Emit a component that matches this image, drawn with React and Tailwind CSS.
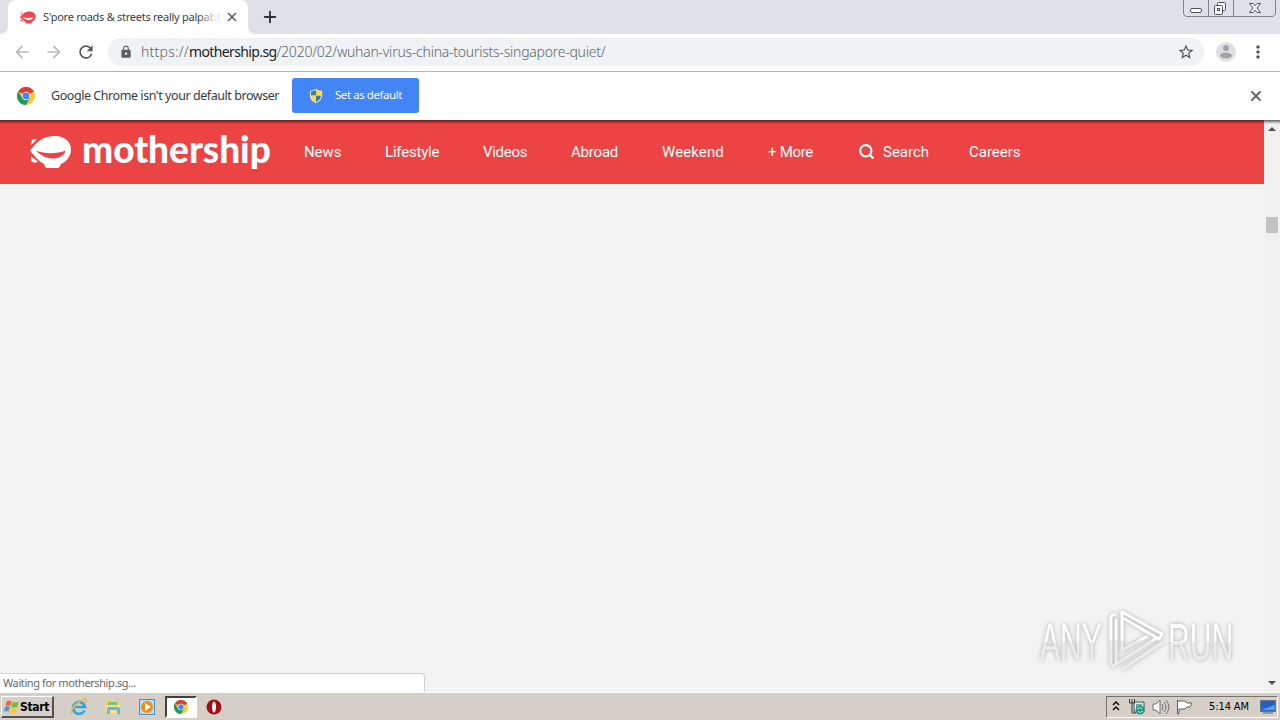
import { Plus, Search, X } from 'lucide-react';
import { MdArrowBack, MdArrowForward, MdLock, MdRefresh, MdStarBorder, MdMoreVert } from 'react-icons/md';

const navLinks = [
  { label: 'News', width: 'w-[81px]', tracking: 'tracking-[-0.1px]' },
  { label: 'Lifestyle', width: 'w-[98px]', tracking: 'tracking-[-0.2px]' },
  { label: 'Videos', width: 'w-[88px]', tracking: 'tracking-[-0.3px]' },
  { label: 'Abroad', width: 'w-[91px]', tracking: 'tracking-[-0.2px]' },
  { label: 'Weekend', width: 'w-[106px]', tracking: 'tracking-[0.1px]' },
  { label: '+ More', width: 'w-[91px]', tracking: 'tracking-[-0.3px]' },
];

const ShipIcon = ({ className, fill, cut }) => (
  <svg viewBox="0 0 42 32" className={className} fill="none">
    <path d="M1.200 7Q1.200 3 5 3H7L1.200 9Z M1 20.500L8.500 25.500Q6.500 27 3.500 26.500Q1 26 1 23Z" fill={fill} />
    <path d="M0 14.500C7 5 14 0 24.500 0C35 0 41 6 41 13.500C41 20.500 36 26 31 28L29.500 31Q29 32 27.500 32H17Q15.500 32 15 30.500L14 28C9 25.500 4.500 20.500 0 14.500Z" fill={fill} stroke={cut} strokeWidth="3" className="[paint-order:stroke]" />
    <path d="M6 14.800C15 18 27 18 35.800 14.500C34 20 29 22.500 22.500 22.500C15.500 22.500 10.500 19 6 14.800Z" fill={cut} />
  </svg>
);

const ChromeIcon = ({ className }) => (
  <svg viewBox="0 0 24 24" className={className}>
    <circle cx="12" cy="12" r="12" fill="#fbc934" />
    <path d="M12 12L1.600 6A12 12 0 0 1 22.400 6Z" fill="#df3c30" />
    <path d="M12 6.500H22.700L21.500 5H9Z" fill="#df3c30" />
    <path d="M1.600 6A12 12 0 0 0 12 24L17.200 14.800L12 12L7 14.500Z" fill="#219a55" />
    <circle cx="12" cy="12" r="5.600" fill="#fff" />
    <circle cx="12" cy="12" r="4.600" fill="#4285f4" />
  </svg>
);

const ShieldIcon = () => (
  <svg viewBox="0 0 16 16" className="h-4 w-4">
    <path d="M8 0.500Q11 2.500 14.500 2.500V7C14.500 11 12 14 8 15.500C4 14 1.500 11 1.500 7V2.500Q5 2.500 8 0.500Z" fill="#dce6ea" stroke="#64798a" strokeWidth="0.7" />
    <path d="M8 2L3 3.800V7.500H8Z M8 7.500H13C13 10.500 11 12.700 8 14Z" fill="#2f79bd" />
    <path d="M8 2L13 3.800V7.500H8Z M8 7.500H3C3 10.500 5 12.700 8 14Z" fill="#ffdc2c" />
  </svg>
);

const WindowControls = () => (
  <svg viewBox="0 0 94 17" className="h-[17px] w-[94px]" fill="none" stroke="#7d8490">
    <path d="M0.500 0V13Q0.500 16.500 4 16.500H88Q92.500 16.500 92.500 13V0M25.500 0V16M50.500 0V16" />
    <rect x="7.500" y="8.500" width="11" height="4" rx="1.500" fill="#fff" stroke="#4d535d" />
    <g stroke="#4d535d" fill="#f4f6f8">
      <rect x="34.500" y="2.500" width="8" height="8" rx="1" />
      <rect x="31.500" y="5.500" width="8" height="9" rx="1" />
      <rect x="34.500" y="8.500" width="2" height="2" />
      <path d="M66.500 3.500H70L72 5.700L74 3.500H77.500L74 8L77.500 12.500H74L72 10.300L70 12.500H66.500L70 8Z" />
    </g>
  </svg>
);

const TabStrip = () => (
  <div className="flex h-[34px] items-start bg-[#dee1e8]">
    <svg viewBox="0 0 8 34" className="h-[34px] w-2"><path d="M0 34Q8 34 8 26V34Z" fill="#fff" /></svg>
    <div className="flex h-[34px] w-60 items-center rounded-t-lg bg-white pl-3 pr-[9px]">
      <ShipIcon className="h-[13px] w-4 shrink-0" fill="#ef4650" cut="#fff" />
      <div className="relative ml-[7px] w-[175px] shrink-0 whitespace-nowrap font-['Noto_Sans','Open_Sans',sans-serif] text-[11px] tracking-[-0.26px] text-[#3c4043]">
        S'pore roads &amp; streets really palpabl
        <span className="absolute inset-y-0 right-0 w-5 bg-gradient-to-r from-transparent to-white" />
      </div>
      <X className="ml-[7px] h-3.5 w-3.5 shrink-0 text-[#5f6368]" strokeWidth={2.8} />
    </div>
    <svg viewBox="0 0 8 34" className="h-[34px] w-2"><path d="M8 34Q0 34 0 26V34Z" fill="#fff" /></svg>
    <Plus className="ml-[5px] mt-2 h-[18px] w-[18px] text-[#303438]" strokeWidth={2.5} />
    <div className="ml-auto mr-[3px]"><WindowControls /></div>
  </div>
);

const Toolbar = () => (
  <div className="flex h-[38px] items-center border-b border-[#b3b5b9] bg-white pb-0.5 pl-3">
    <MdArrowBack className="h-5 w-5 text-[#b9bbbe]" />
    <MdArrowForward className="ml-3 h-5 w-5 text-[#b9bbbe]" />
    <MdRefresh className="ml-3 h-5 w-5 text-[#55595e]" />
    <div className="ml-3 flex h-7 w-[1096px] items-center rounded-full bg-[#f0f3f5] pl-[11px] pr-[9px]">
      <MdLock className="h-3.5 w-3.5 text-[#5b5f64]" />
      <div className="ml-2 flex whitespace-nowrap font-['Noto_Sans','Open_Sans',sans-serif] text-[14px] font-light text-[#5f646a]">
        <span className="tracking-[0.25px]">https://</span>
        <span className="font-normal tracking-[-0.62px] text-[#202124]">mothership.sg</span>
        <span className="tracking-[-0.24px]">/2020/02/wuhan-virus-china-tourists-singapore-quiet/</span>
      </div>
      <MdStarBorder className="ml-auto h-[18px] w-[18px] text-[#50555a]" />
    </div>
    <svg viewBox="0 0 20 20" className="ml-3 h-5 w-5">
      <circle cx="10" cy="10" r="10" fill="#dedfe0" />
      <circle cx="10" cy="6" r="3" fill="#a2a3a4" />
      <ellipse cx="10" cy="13.500" rx="6" ry="3" fill="#a2a3a4" />
    </svg>
    <MdMoreVert className="ml-3 h-5 w-5 text-[#50555a]" />
  </div>
);

const InfoBar = () => (
  <div className="flex h-12 items-center bg-white pl-[17px] pr-[17px]">
    <ChromeIcon className="h-[18px] w-[18px]" />
    <span className="ml-4 w-[241px] whitespace-nowrap font-['Noto_Sans','Open_Sans',sans-serif] text-[12.500px] tracking-[-0.44px] text-[#383b3f]">
      Google Chrome isn't your default browser
    </span>
    <button className="mb-px flex h-[35px] w-[127px] items-center rounded-[3px] bg-[#4285f4] pl-4 font-['Noto_Sans','Open_Sans',sans-serif] text-[11.500px] tracking-[-0.44px] text-white">
      <ShieldIcon />
      <span className="mb-px ml-[11px] whitespace-nowrap">Set as default</span>
    </button>
    <X className="-mr-px ml-auto h-4 w-4 text-[#65686c]" strokeWidth={2.8} />
  </div>
);

const SiteHeader = () => (
  <header className="flex h-16 items-center bg-[#ec4444] pl-[30px] font-[Roboto,sans-serif] text-[15px] text-white">
    <ShipIcon className="h-8 w-[42px]" fill="#fff" cut="#ec4444" />
    <span className="mb-[7px] ml-[10px] w-[222px] font-['Lato',sans-serif] text-[37px] font-black leading-none tracking-[-0.02px]">mothership</span>
    {navLinks.map((link) => (
      <a key={link.label} className={`whitespace-nowrap ${link.width} ${link.tracking}`}>{link.label}</a>
    ))}
    <a className="flex w-[110px] items-center">
      <Search className="-ml-px mb-0.5 h-[17px] w-[17px]" strokeWidth={3} />
      <span className="ml-2">Search</span>
    </a>
    <a>Careers</a>
  </header>
);

const Scrollbar = () => (
  <div className="flex w-4 flex-col items-center bg-[#f1f1f1]">
    <svg viewBox="0 0 16 16" className="mt-px h-4 w-4"><path d="M4 10H12L8 6Z" fill="#505050" /></svg>
    <div className="mt-20 h-4 w-3 bg-[#c1c1c1]" />
    <svg viewBox="0 0 16 16" className="mt-auto h-4 w-4"><path d="M4 5H12L8 9Z" fill="#505050" /></svg>
  </div>
);

const WatermarkWord = ({ children }) => (
  <span className="block w-max origin-left scale-x-[0.59] bg-gradient-to-b from-white from-50% to-[#ececec] to-50% bg-clip-text font-['Liberation_Sans',sans-serif] text-[51px] leading-none text-transparent">
    {children}
  </span>
);

const Watermark = () => (
  <div className="absolute bottom-[18px] right-[46px] flex h-[68px] w-[196px] items-center drop-shadow-[0_0_2px_#aaa]">
    <div className="w-[70px] pl-0.5 pt-1"><WatermarkWord>ANY</WatermarkWord></div>
    <svg viewBox="0 0 58 64" className="h-16 w-[58px] shrink-0" fill="none" strokeWidth="3" strokeLinecap="round" strokeLinejoin="round">
      <defs>
        <linearGradient id="mark" gradientUnits="userSpaceOnUse" x1="0" y1="0" x2="0" y2="64">
          <stop offset="0.5" stopColor="#fff" />
          <stop offset="0.52" stopColor="#ececec" />
        </linearGradient>
      </defs>
      <path stroke="url(#mark)" d="M3 56V10Q3 6 7 7M8 57V12M14 43V4L54 26L51 31M15 10L49 30L5 58M14 20V42L38 29M15 61L54 35" />
    </svg>
    <div className="w-16 pl-0.5 pt-1"><WatermarkWord>RUN</WatermarkWord></div>
  </div>
);

const PageView = () => (
  <main className="relative flex h-[572px] bg-[#f3f3f3]">
    <div className="flex-1"><SiteHeader /></div>
    <Scrollbar />
    <div className="absolute inset-x-0 top-0 h-1 bg-gradient-to-b from-black/60 to-transparent" />
    <Watermark />
    <div className="absolute bottom-0 left-0 flex h-[19px] w-[425px] items-center rounded-tr border-r border-t border-[#d0d0d0] bg-white pl-[3px] font-['Noto_Sans','Open_Sans',sans-serif] text-[11px] tracking-[-0.4px] text-[#65686c]">
      Waiting for mothership.sg...
    </div>
  </main>
);

const WindowsFlag = () => (
  <svg viewBox="0 0 18 16" className="h-[18px] w-[17px] shrink-0">
    <path d="M4 2Q7 0 9 2L7.500 7Q5 5.500 2.500 7Z" fill="#ed6235" />
    <path d="M10 2.500Q13 4 16.500 2.500L15 8Q11.500 9 8.500 7.500Z" fill="#79b940" />
    <path d="M2.200 8Q5 6.500 7.200 8L5.800 13Q3.500 11.500 0.800 13Z" fill="#4699d6" />
    <path d="M8.200 8.500Q11.500 10 14.700 9L13.200 14Q10 15.500 6.700 13.500Z" fill="#f7c83c" />
  </svg>
);

const Taskbar = () => (
  <div className="flex h-7 items-center border-t border-white bg-[#d6cfc7]">
    <button className="ml-px flex h-[22px] w-[53px] items-center border-b-2 border-l border-r-2 border-t border-b-[#55514d] border-l-white border-r-[#55514d] border-t-white pl-px pt-px font-['DejaVu_Sans_Condensed','DejaVu_Sans',sans-serif] text-[12px] font-bold tracking-[-0.3px] text-black">
      <WindowsFlag />Start
    </button>
    <svg viewBox="0 0 18 18" className="ml-4 h-[18px] w-[18px]" fill="none">
      <path d="M14.500 12.500A6 6 0 1 1 15 9H5" stroke="#31a5df" strokeWidth="2.600" />
      <path d="M2 15C-1 18 2 8 9 4C16 -1 18 1 15 5" stroke="#e9bd3e" strokeWidth="1.500" />
    </svg>
    <svg viewBox="0 0 18 18" className="ml-4 h-[18px] w-[18px]">
      <path d="M2 2H7L8 4H15V15H2Z" fill="#efcf67" />
      <path d="M4 4H13V7H4Z" fill="#81bf71" />
      <path d="M2 7H16V15H2Z" fill="#f7e18c" />
      <path d="M3 16V10Q3 9 5 9H14Q16 9 16 11V16H13V12H6V16Z" fill="#64b9e4" />
    </svg>
    <svg viewBox="0 0 18 18" className="ml-4 h-[18px] w-[18px]">
      <rect x="1.500" y="1.500" width="15" height="15" fill="#b9dcf5" stroke="#488fc4" />
      <circle cx="9" cy="9" r="6" fill="#f58b18" />
      <path d="M7 5V13L13 9Z" fill="#fff" />
    </svg>
    <div className="ml-[9px] grid h-[22px] w-8 place-items-center border-2 border-b-white border-l-[#45413e] border-r-white border-t-[#45413e] bg-white">
      <ChromeIcon className="h-3.5 w-3.5" />
    </div>
    <svg viewBox="0 0 18 18" className="ml-2 h-[18px] w-[18px]">
      <circle cx="9" cy="9" r="7.500" fill="#a40e17" />
      <ellipse cx="9" cy="9" rx="2" ry="5.500" fill="#f4f1ee" />
    </svg>
    <div className="ml-auto mr-0.5 flex h-[22px] w-[172px] items-center border border-b-white border-l-[#77716c] border-r-white border-t-[#77716c] pl-[5px]">
      <svg viewBox="0 0 8 10" className="mb-0.5 h-2.5 w-2" fill="none" stroke="#111" strokeWidth="1.500"><path d="M1 4L4 1L7 4M1 9L4 6L7 9" /></svg>
      <svg viewBox="0 0 18 18" className="ml-2 h-[18px] w-[18px]">
        <path d="M6 4H16V14H6Z" fill="#ddebed" stroke="#43535a" />
        <path d="M8 6H14V12H8Z" fill="#68aaa7" />
        <path d="M1.500 1V5H6.500V1M4 1V15H8" fill="none" stroke="#383b3c" />
        <circle cx="12" cy="12" r="4.500" fill="#249783" />
        <path d="M9 11Q12 8 14 11M15 13Q12 16 10 13" fill="none" stroke="#baf0df" />
      </svg>
      <svg viewBox="0 0 18 16" className="ml-1.5 h-4 w-[18px]" fill="none" stroke="#73716f">
        <path d="M1 5H4L8 1V15L4 11H1Z" fill="#f6f6f6" />
        <path d="M10 5Q12 8 10 11M12 3Q16 8 12 13M14 1Q20 8 14 15" />
      </svg>
      <svg viewBox="0 0 18 16" className="ml-1.5 h-4 w-[18px]" fill="#fff" stroke="#605e5b"><path d="M1.500 1V15H3V10H9L11 8H14L16 4H11L9 2H2Z" /></svg>
      <span className="ml-[15px] w-[51px] whitespace-nowrap pt-0.5 font-['DejaVu_Sans_Condensed','DejaVu_Sans',sans-serif] text-[11px] tracking-[-0.1px] text-black">5:14 AM</span>
      <svg viewBox="0 0 16 14" className="h-3.5 w-4">
        <rect x="0.500" y="0.500" width="15" height="11" fill="#2261be" stroke="#61758e" />
        <path d="M1 10L15 5V10Z" fill="#53a0ed" />
        <path d="M3 13H13" stroke="#55616b" />
      </svg>
    </div>
  </div>
);

export default function App() {
  return (
    <div className="h-[720px] w-[1280px] overflow-hidden bg-white">
      <TabStrip />
      <Toolbar />
      <InfoBar />
      <PageView />
      <Taskbar />
    </div>
  );
}
